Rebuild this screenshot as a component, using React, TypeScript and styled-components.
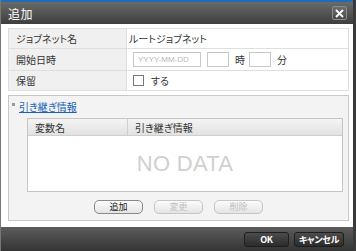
import styled, { createGlobalStyle } from 'styled-components'

const GlobalStyle = createGlobalStyle`
  html, body {
    margin: 0;
    padding: 0;
    background: #3a3a3a;
  }
  body {
    font-family: "Noto Sans CJK JP", "Liberation Sans", sans-serif;
    color: #333;
  }
`

const Dialog = styled.div`
  width: 353px;
  height: 251px;
  display: flex;
  flex-direction: column;
  background: #fff;
  border-left: 1px solid #777;
  box-sizing: border-box;
  overflow: hidden;
`

const TitleBar = styled.div`
  height: 24px;
  flex-shrink: 0;
  box-sizing: border-box;
  border-top: 2px solid #1d6db4;
  background: linear-gradient(#6a6a6a, #3e3e3e);
  display: flex;
  align-items: center;
  justify-content: space-between;
  padding: 0 6px 0 7px;
`

const Title = styled.span`
  color: #fff;
  font-size: 12px;
  letter-spacing: 0.5px;
`

const CloseButton = styled.button`
  width: 15px;
  height: 14px;
  padding: 0;
  border: 1px solid #8a8a8a;
  border-radius: 2px;
  background: linear-gradient(#6e6e6e, #4a4a4a);
  display: flex;
  align-items: center;
  justify-content: center;
`

const Body = styled.div`
  flex: 1;
  min-height: 0;
  padding: 4px 4px 0 7px;
  display: flex;
  flex-direction: column;
`

const FormTable = styled.div`
  display: grid;
  grid-template-columns: 118px 1fr;
  border: 1px solid #dedede;
  border-bottom: none;
`

const Label = styled.div<{ $h: number }>`
  height: ${p => p.$h}px;
  box-sizing: border-box;
  background: #f0f0f0;
  border-bottom: 1px solid #dedede;
  border-right: 1px solid #dedede;
  padding-left: 7px;
  display: flex;
  align-items: center;
  font-size: 10px;
  font-feature-settings: "palt";
`

const Value = styled.div<{ $h: number; $pad: number }>`
  height: ${p => p.$h}px;
  box-sizing: border-box;
  border-bottom: 1px solid #dedede;
  padding-left: ${p => p.$pad}px;
  display: flex;
  align-items: center;
  gap: 4px;
  font-size: 10px;
  font-feature-settings: "palt";
`

const TextInput = styled.div<{ $w: number }>`
  width: ${p => p.$w}px;
  height: 15px;
  box-sizing: border-box;
  border: 1px solid #c8c8c8;
  background: #fff;
  color: #b8b8b8;
  font-family: "Liberation Sans", sans-serif;
  font-size: 8px;
  padding-left: 4px;
  display: flex;
  align-items: center;
  margin-right: 2px;
`

const Check = styled.span`
  width: 9px;
  height: 9px;
  border: 1px solid #777;
  background: #fff;
  margin-right: 3px;
`

const Panel = styled.div`
  margin-top: 4px;
  height: 126px;
  box-sizing: border-box;
  border: 1px solid #c8c8c8;
  background: #f3f3f3;
  display: flex;
  flex-direction: column;
`

const PanelHeader = styled.div`
  height: 20px;
  display: flex;
  align-items: center;
  padding-left: 3px;
  gap: 4px;
`

const Bullet = styled.span`
  width: 3px;
  height: 3px;
  background: #999;
  margin-bottom: 3px;
`

const Link = styled.a`
  color: #1a62b8;
  text-decoration: underline;
  font-size: 10px;
  font-feature-settings: "palt";
`

const DataTable = styled.div`
  margin: 2px 5px 0 18px;
  height: 74px;
  box-sizing: border-box;
  border: 1px solid #c4c4c4;
  background: #fff;
  display: flex;
  flex-direction: column;
`

const HeadRow = styled.div`
  height: 16px;
  display: grid;
  grid-template-columns: 100px 1fr;
  background: linear-gradient(#f4f4f4, #e2e2e2);
  border-bottom: 1px solid #cfcfcf;
`

const HeadCell = styled.div<{ $last?: boolean }>`
  font-size: 10px;
  font-feature-settings: "palt";
  padding-left: 7px;
  display: flex;
  align-items: center;
  border-right: ${p => (p.$last ? 'none' : '1px solid #cfcfcf')};
`

const NoData = styled.div`
  flex: 1;
  display: flex;
  align-items: center;
  justify-content: center;
  font-family: "Liberation Sans", sans-serif;
  font-size: 22px;
  color: #d0d0d0;
  letter-spacing: 0.3px;
`

const ButtonRow = styled.div`
  display: flex;
  justify-content: center;
  gap: 11px;
  margin-top: 8px;
`

const PanelButton = styled.button<{ $disabled?: boolean }>`
  width: 49px;
  height: 14px;
  padding: 0;
  border-radius: 5px;
  border: 1px solid ${p => (p.$disabled ? '#c6c6c6' : '#8a8a8a')};
  background: linear-gradient(#fcfcfc, #e4e4e4);
  color: ${p => (p.$disabled ? '#c0c0c0' : '#222')};
  font-family: "Noto Sans CJK JP", sans-serif;
  font-size: 9px;
  line-height: 12px;
`

const Footer = styled.div`
  height: 24px;
  flex-shrink: 0;
  background: linear-gradient(#5c5c5c, #343434);
  display: flex;
  align-items: center;
  justify-content: flex-end;
  gap: 5px;
  padding-right: 9px;
`

const FooterButton = styled.button<{ $w: number }>`
  width: ${p => p.$w}px;
  height: 15px;
  padding: 0;
  border-radius: 3px;
  border: 1px solid #1e1e1e;
  background: linear-gradient(#4c4c4c, #2c2c2c);
  color: #fff;
  font-family: "Noto Sans CJK JP", "Liberation Sans", sans-serif;
  font-size: 9px;
  font-weight: bold;
  line-height: 13px;
  white-space: nowrap;
  letter-spacing: -0.3px;
  font-feature-settings: "palt";
`

function App() {
  return (
    <>
      <GlobalStyle />
      <Dialog>
        <TitleBar>
          <Title>追加</Title>
          <CloseButton>
            <svg width="9" height="9" viewBox="0 0 9 9">
              <path d="M1 1L8 8M8 1L1 8" stroke="#fff" strokeWidth="1.8" />
            </svg>
          </CloseButton>
        </TitleBar>
        <Body>
          <FormTable>
            <Label $h={20}>ジョブネット名</Label>
            <Value $h={20} $pad={2}>ルートジョブネット</Value>
            <Label $h={22}>開始日時</Label>
            <Value $h={22} $pad={6}>
              <TextInput $w={68}>YYYY-MM-DD</TextInput>
              <TextInput $w={22} />
              <span>時</span>
              <TextInput $w={22} />
              <span>分</span>
            </Value>
            <Label $h={20}>保留</Label>
            <Value $h={20} $pad={6}>
              <Check />
              <span>する</span>
            </Value>
          </FormTable>
          <Panel>
            <PanelHeader>
              <Bullet />
              <Link>引き継ぎ情報</Link>
            </PanelHeader>
            <DataTable>
              <HeadRow>
                <HeadCell>変数名</HeadCell>
                <HeadCell $last>引き継ぎ情報</HeadCell>
              </HeadRow>
              <NoData>NO DATA</NoData>
            </DataTable>
            <ButtonRow>
              <PanelButton>追加</PanelButton>
              <PanelButton $disabled>変更</PanelButton>
              <PanelButton $disabled>削除</PanelButton>
            </ButtonRow>
          </Panel>
        </Body>
        <Footer>
          <FooterButton $w={45}>OK</FooterButton>
          <FooterButton $w={50}>キャンセル</FooterButton>
        </Footer>
      </Dialog>
    </>
  )
}

export default App
